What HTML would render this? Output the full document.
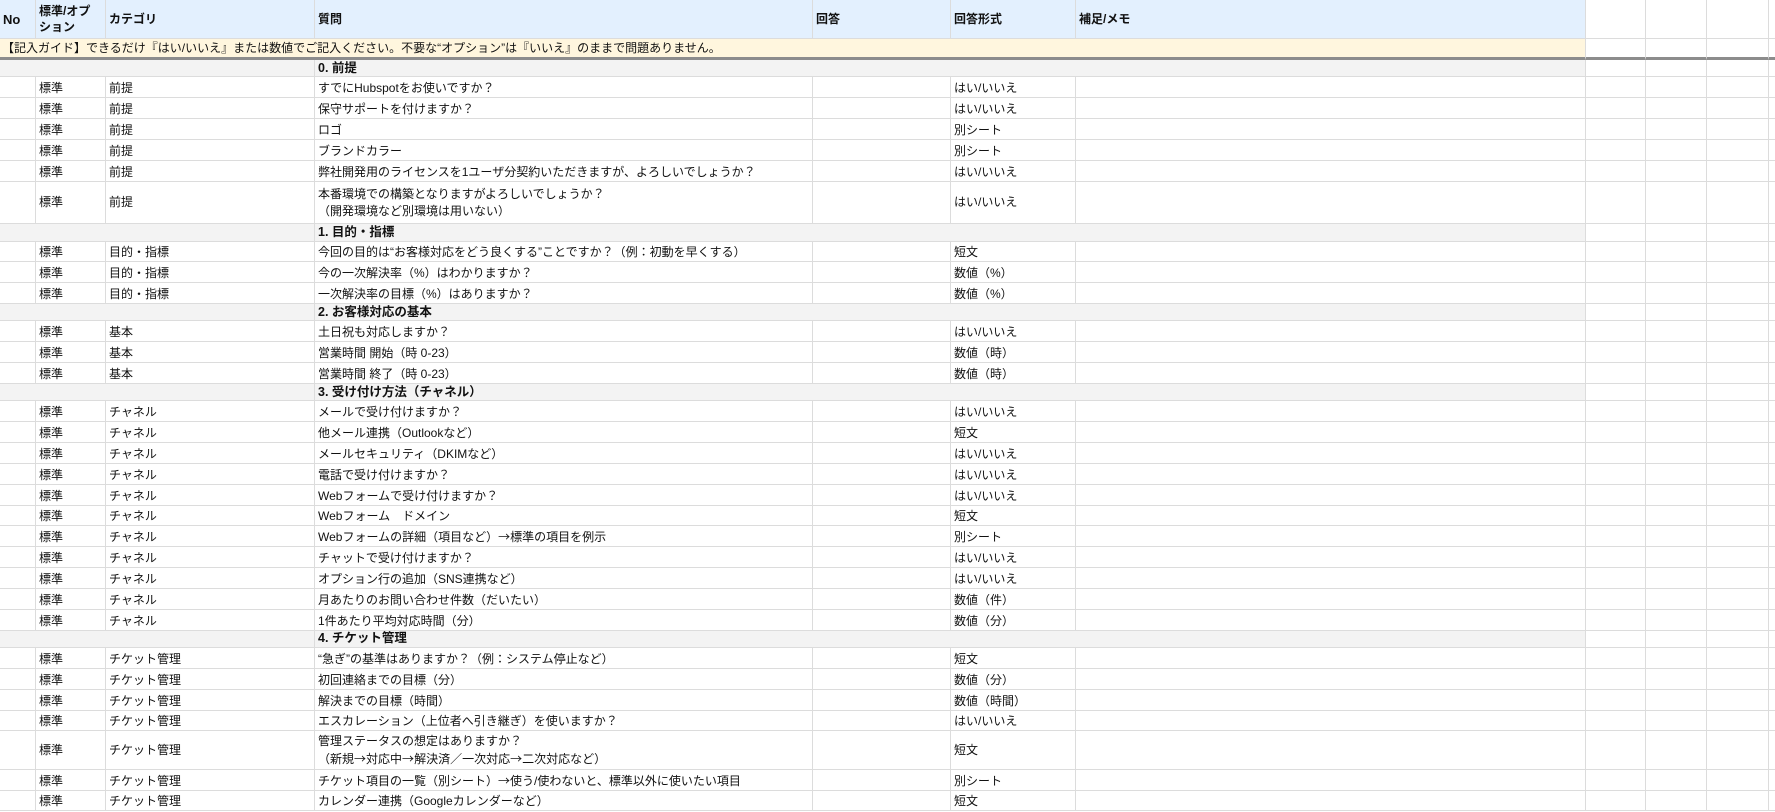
<!DOCTYPE html>
<html><head><meta charset="utf-8"><style>
*{box-sizing:border-box;margin:0;padding:0}
body{width:1775px;height:812px;overflow:hidden;background:#fff;font-family:"Liberation Sans","Noto Sans CJK JP",sans-serif;font-size:12px;color:#111;letter-spacing:0}
.ar{font-family:"Noto Sans CJK JP",sans-serif}
.r{display:flex;height:20.85px}
.r>div{border-right:1px solid #dcdcdc;border-bottom:1.5px solid #dcdcdc;padding:0 3px;display:flex;align-items:flex-end;padding-bottom:0;white-space:nowrap;overflow:hidden;flex:none;line-height:17px}
.a{width:36px}.b{width:70px}.c{width:209px}.d{width:498px}.e{width:138px}.f{width:125px}.g{width:510px}.h{width:60px}.i{width:61px}.j{width:62px}.k{width:10px}
.hd{height:39px}
.hd>div.m{background:#e3f0fe;font-weight:bold;align-items:center;padding-bottom:0}
.gd{height:21px}
.gd>div{border-bottom:3px solid #8c8c8c!important}
.gd .gt{width:1586px;background:#fff6de;padding-left:2px}
.s{height:17.4px}
.s .sa{width:315px;background:#f3f3f3}
.s .sb{width:1271px;background:#f3f3f3;font-weight:bold;align-items:center;padding-bottom:0;font-size:12.5px}
.dbl{height:42.5px}.dbl2{height:38.4px}
.dbl>div,.dbl2>div{align-items:center;padding-bottom:0}
.r.dbl>div.d{display:block;padding-top:4px;line-height:17px}
.r.dbl2>div.d{display:block;padding-top:2px;line-height:17px}
</style></head><body>
<div class="r hd"><div class="a m" style="font-size:13px">No</div><div class="b m" style="white-space:normal;line-height:16px">標準/オプ<br>ション</div><div class="c m">カテゴリ</div><div class="d m">質問</div><div class="e m">回答</div><div class="f m">回答形式</div><div class="g m">補足/メモ</div><div class="h"></div><div class="i"></div><div class="j"></div><div class="k"></div></div>
<div class="r gd"><div class="gt">【記入ガイド】できるだけ『はい/いいえ』または数値でご記入ください。不要な“オプション”は『いいえ』のままで問題ありません。</div><div class="h"></div><div class="i"></div><div class="j"></div><div class="k"></div></div>

<div class="r s"><div class="sa"></div><div class="sb">0. 前提</div><div class="h"></div><div class="i"></div><div class="j"></div><div class="k"></div></div>
<div class="r"><div class="a"></div><div class="b">標準</div><div class="c">前提</div><div class="d">すでにHubspotをお使いですか？</div><div class="e"></div><div class="f">はい/いいえ</div><div class="g"></div><div class="h"></div><div class="i"></div><div class="j"></div><div class="k"></div></div>
<div class="r"><div class="a"></div><div class="b">標準</div><div class="c">前提</div><div class="d">保守サポートを付けますか？</div><div class="e"></div><div class="f">はい/いいえ</div><div class="g"></div><div class="h"></div><div class="i"></div><div class="j"></div><div class="k"></div></div>
<div class="r"><div class="a"></div><div class="b">標準</div><div class="c">前提</div><div class="d">ロゴ</div><div class="e"></div><div class="f">別シート</div><div class="g"></div><div class="h"></div><div class="i"></div><div class="j"></div><div class="k"></div></div>
<div class="r"><div class="a"></div><div class="b">標準</div><div class="c">前提</div><div class="d">ブランドカラー</div><div class="e"></div><div class="f">別シート</div><div class="g"></div><div class="h"></div><div class="i"></div><div class="j"></div><div class="k"></div></div>
<div class="r"><div class="a"></div><div class="b">標準</div><div class="c">前提</div><div class="d">弊社開発用のライセンスを1ユーザ分契約いただきますが、よろしいでしょうか？</div><div class="e"></div><div class="f">はい/いいえ</div><div class="g"></div><div class="h"></div><div class="i"></div><div class="j"></div><div class="k"></div></div>
<div class="r dbl"><div class="a"></div><div class="b">標準</div><div class="c">前提</div><div class="d">本番環境での構築となりますがよろしいでしょうか？<br>（開発環境など別環境は用いない）</div><div class="e"></div><div class="f">はい/いいえ</div><div class="g"></div><div class="h"></div><div class="i"></div><div class="j"></div><div class="k"></div></div>

<div class="r s"><div class="sa"></div><div class="sb">1. 目的・指標</div><div class="h"></div><div class="i"></div><div class="j"></div><div class="k"></div></div>
<div class="r"><div class="a"></div><div class="b">標準</div><div class="c">目的・指標</div><div class="d">今回の目的は“お客様対応をどう良くする”ことですか？（例：初動を早くする）</div><div class="e"></div><div class="f">短文</div><div class="g"></div><div class="h"></div><div class="i"></div><div class="j"></div><div class="k"></div></div>
<div class="r"><div class="a"></div><div class="b">標準</div><div class="c">目的・指標</div><div class="d">今の一次解決率（%）はわかりますか？</div><div class="e"></div><div class="f">数値（%）</div><div class="g"></div><div class="h"></div><div class="i"></div><div class="j"></div><div class="k"></div></div>
<div class="r"><div class="a"></div><div class="b">標準</div><div class="c">目的・指標</div><div class="d">一次解決率の目標（%）はありますか？</div><div class="e"></div><div class="f">数値（%）</div><div class="g"></div><div class="h"></div><div class="i"></div><div class="j"></div><div class="k"></div></div>

<div class="r s"><div class="sa"></div><div class="sb">2. お客様対応の基本</div><div class="h"></div><div class="i"></div><div class="j"></div><div class="k"></div></div>
<div class="r"><div class="a"></div><div class="b">標準</div><div class="c">基本</div><div class="d">土日祝も対応しますか？</div><div class="e"></div><div class="f">はい/いいえ</div><div class="g"></div><div class="h"></div><div class="i"></div><div class="j"></div><div class="k"></div></div>
<div class="r"><div class="a"></div><div class="b">標準</div><div class="c">基本</div><div class="d">営業時間 開始（時 0-23）</div><div class="e"></div><div class="f">数値（時）</div><div class="g"></div><div class="h"></div><div class="i"></div><div class="j"></div><div class="k"></div></div>
<div class="r"><div class="a"></div><div class="b">標準</div><div class="c">基本</div><div class="d">営業時間 終了（時 0-23）</div><div class="e"></div><div class="f">数値（時）</div><div class="g"></div><div class="h"></div><div class="i"></div><div class="j"></div><div class="k"></div></div>

<div class="r s"><div class="sa"></div><div class="sb">3. 受け付け方法（チャネル）</div><div class="h"></div><div class="i"></div><div class="j"></div><div class="k"></div></div>
<div class="r"><div class="a"></div><div class="b">標準</div><div class="c">チャネル</div><div class="d">メールで受け付けますか？</div><div class="e"></div><div class="f">はい/いいえ</div><div class="g"></div><div class="h"></div><div class="i"></div><div class="j"></div><div class="k"></div></div>
<div class="r"><div class="a"></div><div class="b">標準</div><div class="c">チャネル</div><div class="d">他メール連携（Outlookなど）</div><div class="e"></div><div class="f">短文</div><div class="g"></div><div class="h"></div><div class="i"></div><div class="j"></div><div class="k"></div></div>
<div class="r"><div class="a"></div><div class="b">標準</div><div class="c">チャネル</div><div class="d">メールセキュリティ（DKIMなど）</div><div class="e"></div><div class="f">はい/いいえ</div><div class="g"></div><div class="h"></div><div class="i"></div><div class="j"></div><div class="k"></div></div>
<div class="r"><div class="a"></div><div class="b">標準</div><div class="c">チャネル</div><div class="d">電話で受け付けますか？</div><div class="e"></div><div class="f">はい/いいえ</div><div class="g"></div><div class="h"></div><div class="i"></div><div class="j"></div><div class="k"></div></div>
<div class="r"><div class="a"></div><div class="b">標準</div><div class="c">チャネル</div><div class="d">Webフォームで受け付けますか？</div><div class="e"></div><div class="f">はい/いいえ</div><div class="g"></div><div class="h"></div><div class="i"></div><div class="j"></div><div class="k"></div></div>
<div class="r"><div class="a"></div><div class="b">標準</div><div class="c">チャネル</div><div class="d">Webフォーム　ドメイン</div><div class="e"></div><div class="f">短文</div><div class="g"></div><div class="h"></div><div class="i"></div><div class="j"></div><div class="k"></div></div>
<div class="r"><div class="a"></div><div class="b">標準</div><div class="c">チャネル</div><div class="d"><span>Webフォームの詳細（項目など）<span class="ar">→</span>標準の項目を例示</span></div><div class="e"></div><div class="f">別シート</div><div class="g"></div><div class="h"></div><div class="i"></div><div class="j"></div><div class="k"></div></div>
<div class="r"><div class="a"></div><div class="b">標準</div><div class="c">チャネル</div><div class="d">チャットで受け付けますか？</div><div class="e"></div><div class="f">はい/いいえ</div><div class="g"></div><div class="h"></div><div class="i"></div><div class="j"></div><div class="k"></div></div>
<div class="r"><div class="a"></div><div class="b">標準</div><div class="c">チャネル</div><div class="d">オプション行の追加（SNS連携など）</div><div class="e"></div><div class="f">はい/いいえ</div><div class="g"></div><div class="h"></div><div class="i"></div><div class="j"></div><div class="k"></div></div>
<div class="r"><div class="a"></div><div class="b">標準</div><div class="c">チャネル</div><div class="d">月あたりのお問い合わせ件数（だいたい）</div><div class="e"></div><div class="f">数値（件）</div><div class="g"></div><div class="h"></div><div class="i"></div><div class="j"></div><div class="k"></div></div>
<div class="r"><div class="a"></div><div class="b">標準</div><div class="c">チャネル</div><div class="d">1件あたり平均対応時間（分）</div><div class="e"></div><div class="f">数値（分）</div><div class="g"></div><div class="h"></div><div class="i"></div><div class="j"></div><div class="k"></div></div>

<div class="r s"><div class="sa"></div><div class="sb">4. チケット管理</div><div class="h"></div><div class="i"></div><div class="j"></div><div class="k"></div></div>
<div class="r"><div class="a"></div><div class="b">標準</div><div class="c">チケット管理</div><div class="d">“急ぎ”の基準はありますか？（例：システム停止など）</div><div class="e"></div><div class="f">短文</div><div class="g"></div><div class="h"></div><div class="i"></div><div class="j"></div><div class="k"></div></div>
<div class="r"><div class="a"></div><div class="b">標準</div><div class="c">チケット管理</div><div class="d">初回連絡までの目標（分）</div><div class="e"></div><div class="f">数値（分）</div><div class="g"></div><div class="h"></div><div class="i"></div><div class="j"></div><div class="k"></div></div>
<div class="r"><div class="a"></div><div class="b">標準</div><div class="c">チケット管理</div><div class="d">解決までの目標（時間）</div><div class="e"></div><div class="f">数値（時間）</div><div class="g"></div><div class="h"></div><div class="i"></div><div class="j"></div><div class="k"></div></div>
<div class="r"><div class="a"></div><div class="b">標準</div><div class="c">チケット管理</div><div class="d">エスカレーション（上位者へ引き継ぎ）を使いますか？</div><div class="e"></div><div class="f">はい/いいえ</div><div class="g"></div><div class="h"></div><div class="i"></div><div class="j"></div><div class="k"></div></div>
<div class="r dbl2"><div class="a"></div><div class="b">標準</div><div class="c">チケット管理</div><div class="d">管理ステータスの想定はありますか？<br>（新規<span class="ar">→</span>対応中<span class="ar">→</span>解決済／一次対応<span class="ar">→</span>二次対応など）</div><div class="e"></div><div class="f">短文</div><div class="g"></div><div class="h"></div><div class="i"></div><div class="j"></div><div class="k"></div></div>
<div class="r"><div class="a"></div><div class="b">標準</div><div class="c">チケット管理</div><div class="d"><span>チケット項目の一覧（別シート）<span class="ar">→</span>使う/使わないと、標準以外に使いたい項目</span></div><div class="e"></div><div class="f">別シート</div><div class="g"></div><div class="h"></div><div class="i"></div><div class="j"></div><div class="k"></div></div>
<div class="r"><div class="a"></div><div class="b">標準</div><div class="c">チケット管理</div><div class="d">カレンダー連携（Googleカレンダーなど）</div><div class="e"></div><div class="f">短文</div><div class="g"></div><div class="h"></div><div class="i"></div><div class="j"></div><div class="k"></div></div>
</body></html>
